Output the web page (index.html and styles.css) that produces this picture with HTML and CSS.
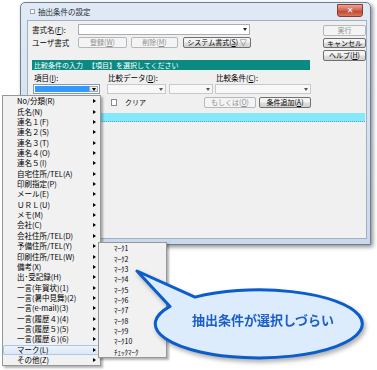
FILE: index.html
```html
<!DOCTYPE html>
<html lang="ja">
<head>
  <meta charset="UTF-8">
  <title>抽出条件の設定</title>
  <link rel="stylesheet" href="styles.css">
</head>
<body>
  <div class="window">
    <div class="titlebar">
      <span class="app-icon"></span>
      <span class="title">抽出条件の設定</span>
      <span class="close">✕</span>
    </div>

    <div class="client">
      <div class="main">
        <div class="row">
          <span class="lbl">書式名(<u>F</u>):</span>
          <div class="combo edit"><span class="arrow"></span></div>
        </div>
        <div class="row r2">
          <span class="lbl">ユーザ書式</span>
          <button class="btn b-reg" disabled>登録(<u>W</u>)</button>
          <button class="btn b-del" disabled>削除(<u>M</u>)</button>
          <button class="btn b-sys">システム書式(<u>S</u>) ▽</button>
        </div>

        <div class="banner">
          <span class="banner-head">比較条件の入力</span>
          <span>【項目】を選択してください</span>
        </div>

        <div class="fields">
          <span class="flbl">項目(<u>I</u>):</span>
          <span class="flbl">比較データ(<u>D</u>):</span>
          <span></span>
          <span class="flbl">比較条件(<u>C</u>):</span>
          <div class="combo item-combo"><span class="sel"></span><span class="drop"><span class="arrow"></span></span></div>
          <div class="combo off w59"><span class="arrow"></span></div>
          <div class="combo off w44"><span class="arrow"></span></div>
          <div class="combo off w96"><span class="arrow"></span></div>
        </div>

        <div class="row r6">
          <span class="clear"><span class="page-icon"></span>クリア</span>
          <button class="btn b-or" disabled>もしくは(<u>O</u>)</button>
          <button class="btn b-add">条件追加(<u>A</u>)</button>
        </div>
      </div>

      <div class="side">
        <button class="btn" disabled>実行</button>
        <button class="btn">キャンセル</button>
        <button class="btn">ヘルプ(<u>H</u>)</button>
      </div>

      <div class="list"><div class="list-sel"></div></div>
    </div>
  </div>

  <div class="menu">
    <div class="item">No/分類(R)<span class="sub"></span></div>
    <div class="item">氏名(N)<span class="sub"></span></div>
    <div class="item">連名１(F)<span class="sub"></span></div>
    <div class="item">連名２(S)<span class="sub"></span></div>
    <div class="item">連名３(T)<span class="sub"></span></div>
    <div class="item">連名４(O)<span class="sub"></span></div>
    <div class="item">連名５(I)<span class="sub"></span></div>
    <div class="item">自宅住所/TEL(A)<span class="sub"></span></div>
    <div class="item">印刷指定(P)<span class="sub"></span></div>
    <div class="item">メール(E)<span class="sub"></span></div>
    <div class="item">ＵＲＬ(U)<span class="sub"></span></div>
    <div class="item">メモ(M)<span class="sub"></span></div>
    <div class="item">会社(C)<span class="sub"></span></div>
    <div class="item">会社住所/TEL(D)<span class="sub"></span></div>
    <div class="item">予備住所/TEL(Y)<span class="sub"></span></div>
    <div class="item">印刷住所/TEL(W)<span class="sub"></span></div>
    <div class="item">備考(X)<span class="sub"></span></div>
    <div class="item">出･受記録(H)<span class="sub"></span></div>
    <div class="item">一言(年賀状)(1)<span class="sub"></span></div>
    <div class="item">一言(暑中見舞)(2)<span class="sub"></span></div>
    <div class="item">一言(e-mail)(3)<span class="sub"></span></div>
    <div class="item">一言(履歴４)(4)<span class="sub"></span></div>
    <div class="item">一言(履歴５)(5)<span class="sub"></span></div>
    <div class="item">一言(履歴６)(6)<span class="sub"></span></div>
    <div class="item on">マーク(L)<span class="sub"></span></div>
    <div class="item">その他(Z)<span class="sub"></span></div>
  </div>

  <div class="submenu">
    <div class="item">ﾏｰｸ1</div>
    <div class="item">ﾏｰｸ2</div>
    <div class="item">ﾏｰｸ3</div>
    <div class="item">ﾏｰｸ4</div>
    <div class="item">ﾏｰｸ5</div>
    <div class="item">ﾏｰｸ6</div>
    <div class="item">ﾏｰｸ7</div>
    <div class="item">ﾏｰｸ8</div>
    <div class="item">ﾏｰｸ9</div>
    <div class="item">ﾏｰｸ10</div>
    <div class="item">ﾁｪｯｸﾏｰｸ</div>
  </div>

  <svg class="callout" viewBox="0 0 377 370" width="377" height="370">
    <path d="M137 271 L195 297.1 A103.5 34 0 1 1 170 306.4 Z"/>
    <text x="263" y="325" text-anchor="middle">抽出条件が選択しづらい</text>
  </svg>
</body>
</html>
```

FILE: styles.css
```css
body {
  margin: 0;
  width: 377px;
  height: 370px;
  overflow: hidden;
  position: relative;
  background: #fff;
  font-family: "Noto Sans CJK JP", "Noto Sans", sans-serif;
  font-size: 7.5px;
  color: #000;
}
u {
  text-decoration: underline;
}

/* window frame */
.window {
  margin: 2px 0 0 20px;
  width: 351px;
  height: 243px;
  box-sizing: border-box;
  border: 1px solid #6f8094;
  border-radius: 5px 5px 0 0;
  background: linear-gradient(#e1eaf4, #c9d9eb);
  box-shadow: 2px 2px 4px rgba(0,0,0,0.45);
  display: flex;
  flex-direction: column;
  padding: 0 3px 5px 6px;
}
.titlebar {
  height: 17px;
  display: flex;
  align-items: center;
}
.app-icon {
  width: 5px;
  height: 5px;
  margin-left: 3px;
  background: #fff;
  border: 1px solid #9aa6b4;
  box-sizing: border-box;
}
.title {
  margin-left: 3px;
  color: #1e2a38;
  line-height: 10px;
}
.close {
  margin-left: auto;
  margin-right: 4px;
  align-self: flex-start;
  margin-top: 1px;
  width: 26px;
  height: 13px;
  box-sizing: border-box;
  border: 1px solid #8a3a30;
  border-radius: 0 0 3px 3px;
  background: linear-gradient(#eaa597, #d2604c 50%, #c0402c 51%, #d47a5e);
  color: #fff;
  font-family: "DejaVu Sans", sans-serif;
  font-weight: bold;
  font-size: 8px;
  line-height: 11px;
  text-align: center;
}

/* client area */
.client {
  flex: 1;
  background: #f0f0f0;
  border: 1px solid #9fb0c3;
  display: grid;
  grid-template-columns: 279px 43px;
  column-gap: 12px;
  align-content: start;
  padding: 3px 0 0 4px;
}
.row {
  display: flex;
  align-items: center;
  height: 11px;
}
.r2 {
  margin-top: 2px;
}
.lbl {
  width: 46px;
  line-height: 10px;
}

.btn {
  box-sizing: border-box;
  height: 11px;
  padding: 0;
  border: 1px solid #707070;
  border-radius: 2px;
  background: linear-gradient(#f4f4f4 45%, #dddddd 55%, #d2d2d2);
  font-family: inherit;
  font-size: 7px;
  line-height: 9px;
  color: #000;
}
.btn:disabled {
  border-color: #b4b8bb;
  background: #f4f4f4;
  color: #8e8e8e;
}
.b-reg { width: 49px; }
.b-del { width: 47px; margin-left: 4px; }
.b-sys { width: 68px; margin-left: 5px; }
.b-or { width: 52px; margin-left: auto; }
.b-add { width: 52px; margin-left: 3px; }

.combo {
  box-sizing: border-box;
  height: 10px;
  border: 1px solid #abadb3;
  background: #fff;
  display: flex;
  align-items: center;
  justify-content: flex-end;
}
.arrow {
  width: 0;
  height: 0;
  border-top: 3px solid #222;
  border-left: 2px solid transparent;
  border-right: 2px solid transparent;
  margin-right: 2px;
}
.edit {
  width: 172px;
  height: 11px;
}
.off {
  background: #f8f8f8;
  border-color: #c7c9cc;
}
.off .arrow {
  border-top-color: #555;
}
.w59 { width: 59px; }
.w44 { width: 44px; }
.w96 { width: 96px; }

.banner {
  margin-top: 12px;
  height: 10px;
  width: 278px;
  box-sizing: border-box;
  padding-left: 2px;
  background: #0b8a82;
  color: #fff;
  display: flex;
  align-items: center;
  font-size: 7px;
}
.banner-head {
  width: 54px;
}

.fields {
  display: grid;
  grid-template-columns: 74px 62px 46px 96px;
  grid-template-rows: 10px 10px;
  row-gap: 1px;
  margin-top: 3px;
  margin-left: 1px;
}
.flbl {
  padding-left: 1px;
  line-height: 10px;
}
.item-combo {
  width: 67px;
  padding: 1px;
  border-color: #7f9db9;
}
.item-combo .sel {
  flex: 1;
  align-self: stretch;
  background: #3399ff;
}
.item-combo .drop {
  width: 9px;
  align-self: stretch;
  box-sizing: border-box;
  border: 1px solid #a6a6a6;
  background: linear-gradient(#f4f4f4, #dcdcdc);
  display: flex;
  align-items: center;
  justify-content: center;
}
.item-combo .drop .arrow {
  margin: 0;
  border-top-color: #000;
}

.r6 {
  margin-top: 3px;
  height: 10px;
}
.clear {
  margin-left: 79px;
  display: flex;
  align-items: center;
  gap: 8px;
  font-size: 7px;
}
.page-icon {
  width: 4px;
  height: 5px;
  border: 1px solid #8a8a8a;
  background: #fff;
}

.side {
  display: flex;
  flex-direction: column;
  gap: 2px;
  padding-top: 1px;
}
.side .btn {
  height: 10.5px;
  width: 43px;
}

.list {
  grid-column: 1 / -1;
  margin: 6px 1px 0 -2px;
}
.list-sel {
  height: 9px;
  box-sizing: border-box;
  background: #85e8fb;
  border-bottom: 1px dotted #4aa9c0;
}

/* popup menus */
.menu, .submenu {
  position: absolute;
  box-sizing: border-box;
  border: 1px solid #979797;
  background: #f1f1f1;
  box-shadow: 2px 2px 2px rgba(0,0,0,0.3);
}
.menu {
  left: 2px;
  top: 95px;
  width: 99px;
}
.menu .item {
  height: 10.37px;
  display: flex;
  align-items: center;
  padding: 0 4px 0 14px;
  line-height: 10px;
}
.menu .item.on {
  background: linear-gradient(#eef4fb, #dae7f6);
  box-shadow: inset 0 0 0 1px #a9c8ea;
  border-radius: 2px;
}
.sub {
  margin-left: auto;
  width: 0;
  height: 0;
  border-left: 3px solid #000;
  border-top: 2px solid transparent;
  border-bottom: 2px solid transparent;
}
.submenu {
  left: 98px;
  top: 242px;
  width: 69px;
}
.submenu .item {
  height: 10.37px;
  display: flex;
  align-items: center;
  padding-left: 15px;
  font-size: 7px;
  line-height: 10px;
}

/* annotation balloon */
.callout {
  position: absolute;
  left: 0;
  top: 0;
  pointer-events: none;
  filter: drop-shadow(2px 3px 2px rgba(0,0,0,0.3));
}
.callout path {
  fill: #dcecfd;
  stroke: #0b5dcc;
  stroke-width: 3;
  stroke-linejoin: round;
}
.callout text {
  fill: #1b5ec6;
  font-family: "Noto Sans CJK JP", sans-serif;
  font-weight: bold;
  font-size: 13px;
}
```
